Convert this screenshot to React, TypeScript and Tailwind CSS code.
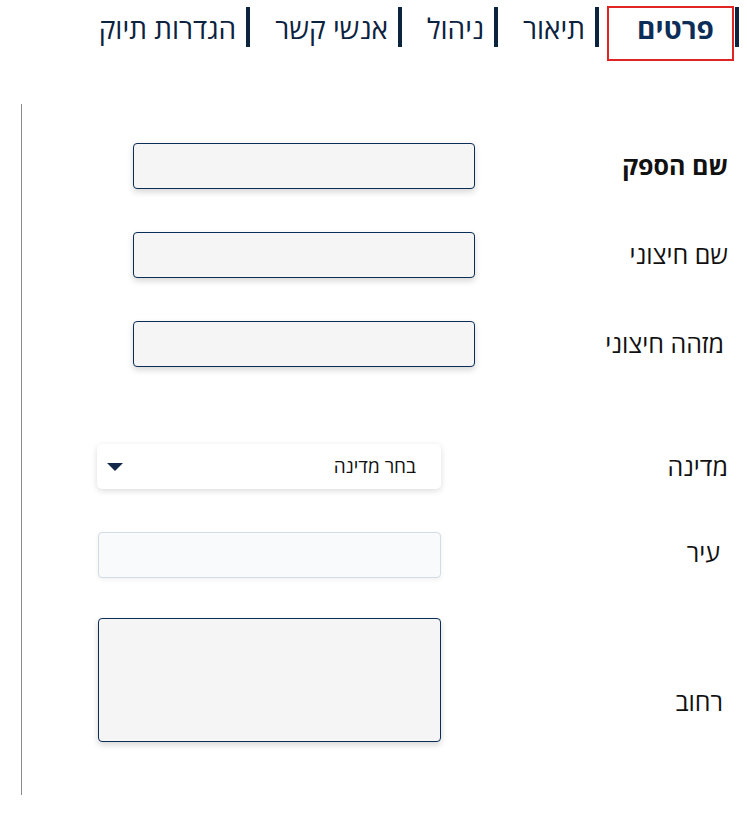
import React from "react";

const tabs = ["פרטים", "תיאור", "ניהול", "אנשי קשר", "הגדרות תיוק"];

export default function App() {
  return (
    <div dir="rtl" className="w-[747px] h-[819px] bg-white text-[#111] font-['Open_Sans','Noto_Sans',sans-serif] overflow-hidden">
      {/* tabs */}
      <div className="flex items-start pr-[8px] pt-[7px] h-[61px]">
        {tabs.map((t, i) => (
          <div key={t} className="flex items-start">
            <div className="w-[4px] h-[40px] bg-[#0c2340]" />
            {i === 0 ? (
              <div className="ml-[8px] mr-[1px] -mt-[1px] w-[127px] h-[55px] border-2 border-[#e02424] flex items-start justify-center pl-[10px] pt-[2px]">
                <span className="text-[28px] leading-[36px] font-bold text-[#0c2d57]">{t}</span>
              </div>
            ) : (
              <div className="pr-[10px] pl-[25px] pt-[3px]">
                <span className="text-[28px] leading-[36px] text-[#0c2340]">{t}</span>
              </div>
            )}
          </div>
        ))}
      </div>

      {/* form */}
      <div className="mt-[43px] ml-[21px] h-[691px] border-l border-[#8a8a8a] pr-[19px] pt-[39px]">
        <div className="flex items-center h-[46px]">
          <div className="w-[253px] text-[25px] font-bold">שם הספק</div>
          <div className="w-[342px] h-[46px] rounded-[4px] border border-[#0c2d57] bg-[#f5f5f5] shadow-[0_3px_6px_rgba(0,0,0,0.16)]" />
        </div>
        <div className="flex items-center h-[46px] mt-[43px]">
          <div className="w-[253px] text-[25px]">שם חיצוני</div>
          <div className="w-[342px] h-[46px] rounded-[4px] border border-[#0c2d57] bg-[#f5f5f5] shadow-[0_3px_6px_rgba(0,0,0,0.16)]" />
        </div>
        <div className="flex items-center h-[46px] mt-[43px]">
          <div className="w-[253px] text-[25px] pr-[4px]">מזהה חיצוני</div>
          <div className="w-[342px] h-[46px] rounded-[4px] border border-[#0c2d57] bg-[#f5f5f5] shadow-[0_3px_6px_rgba(0,0,0,0.16)]" />
        </div>
        <div className="flex items-center h-[45px] mt-[77px]">
          <div className="w-[287px] text-[25px]">מדינה</div>
          <div className="w-[344px] h-[45px] rounded-[5px] bg-white shadow-[0_2px_6px_rgba(0,0,0,0.14)] flex items-center justify-between pr-[25px] pl-[10px]">
            <span className="text-[19px]">בחר מדינה</span>
            <svg width="16" height="8" viewBox="0 0 16 8"><path d="M0 0 L16 0 L8 8 Z" fill="#14284b" /></svg>
          </div>
        </div>
        <div className="flex items-center h-[46px] mt-[43px]">
          <div className="w-[287px] text-[25px] pr-[8px] pb-[4px]">עיר</div>
          <div className="w-[343px] h-[46px] rounded-[4px] border border-[#d3dce6] bg-[#f9fafb] shadow-[0_2px_5px_rgba(0,0,0,0.06)]" />
        </div>
        <div className="flex items-end h-[124px] mt-[40px]">
          <div className="w-[287px] text-[25px] pr-[5px] pb-[22px]">רחוב</div>
          <div className="w-[343px] h-[124px] rounded-[4px] border border-[#0c2d57] bg-[#f5f5f5] shadow-[0_3px_6px_rgba(0,0,0,0.16)]" />
        </div>
      </div>
    </div>
  );
}
